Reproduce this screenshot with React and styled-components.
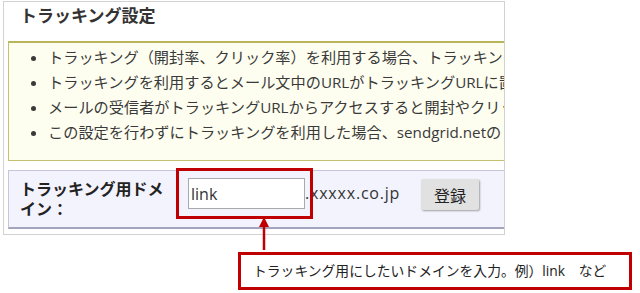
import React from "react";
import styled, { createGlobalStyle } from "styled-components";

const Global = createGlobalStyle`
  html, body { margin: 0; padding: 0; background: #ffffff; }
  body {
    font-family: "Open Sans", "Noto Sans CJK JP", sans-serif;
    color: #333;
    text-spacing-trim: space-all;
  }
`;

const Page = styled.div`
  position: relative;
  width: 640px;
  height: 293px;
  overflow: hidden;
  box-sizing: border-box;
  padding: 1px 0 0 3px;
  display: flex;
  flex-direction: column;
`;

const Panel = styled.section`
  width: 502px;
  height: 234px;
  box-sizing: border-box;
  border: 1px solid #d2d2d2;
  background: #fff;
  display: flex;
  flex-direction: column;
`;

const Title = styled.h2`
  margin: 0;
  height: 39px;
  box-sizing: border-box;
  padding-left: 16px;
  font-family: "Noto Sans CJK JP", sans-serif;
  font-size: 17px;
  font-weight: 700;
  line-height: 26px;
  color: #333;
`;

const Notice = styled.div`
  margin-left: 4px;
  height: 120px;
  box-sizing: border-box;
  background: #fefef0;
  border-top: 2px solid #b8b55c;
  border-left: 1px solid #c4c170;
  border-bottom: 1px solid #c4c170;
  overflow: hidden;
  padding: 2px 0 15px;
`;

const List = styled.ul`
  margin: 0;
  padding-left: 39px;
  list-style: disc;
`;

const Item = styled.li`
  font-size: 15.2px;
  line-height: 25px;
  white-space: nowrap;
  color: #3a3a3a;
`;

const Row = styled.div`
  margin: 9px 0 0 4px;
  height: 59px;
  box-sizing: border-box;
  background: #f3f3fd;
  border-top: 1px solid #c6c6d8;
  border-left: 1px solid #c6c6d8;
  border-bottom: 2px solid #a4a4bc;
  padding-top: 7px;
  display: flex;
  align-items: flex-start;
`;

const Label = styled.div`
  width: 167px;
  box-sizing: border-box;
  padding: 0 6px 0 11px;
  font-family: "Noto Sans CJK JP", sans-serif;
  font-size: 16px;
  font-weight: 700;
  line-height: 20px;
  color: #222;
`;

const InputWrap = styled.div`
  position: relative;
  margin-left: 12px;
  display: flex;
`;

const Input = styled.input`
  width: 117px;
  height: 31px;
  box-sizing: border-box;
  border: 1px solid #a9a9a9;
  background: #fff;
  padding: 0 2px;
  font-family: "Open Sans", "Noto Sans CJK JP", sans-serif;
  font-size: 16px;
  color: #333;
  outline: none;
`;

const Highlight = styled.div`
  position: absolute;
  left: -12px;
  top: -10px;
  width: 137px;
  height: 51px;
  box-sizing: border-box;
  border: 3px solid #c00000;
  pointer-events: none;
`;

const Arrow = styled.svg`
  position: absolute;
  left: 78px;
  top: calc(100% + 1px);
  overflow: visible;
`;

const Domain = styled.span`
  width: 116px;
  font-size: 16px;
  letter-spacing: 0.8px;
  line-height: 31px;
  color: #333;
`;

const Button = styled.button`
  width: 58px;
  height: 31px;
  margin-top: 1px;
  border: 0;
  border-radius: 2px;
  background: #e1e1e1;
  box-shadow: 1px 1px 2px rgba(0, 0, 0, 0.35);
  font-family: "Noto Sans CJK JP", sans-serif;
  font-size: 16px;
  color: #222;
  padding: 0;
`;

const Callout = styled.div`
  margin: 17px 0 0 235px;
  width: 394px;
  height: 38px;
  box-sizing: border-box;
  border: 3px solid #c00000;
  background: #fff;
  padding-left: 12px;
  font-family: "Open Sans", "Noto Sans CJK JP", sans-serif;
  font-size: 13.8px;
  line-height: 32px;
  color: #222;
  white-space: nowrap;
`;

const items = [
  "トラッキング（開封率、クリック率）を利用する場合、トラッキング用ドメインの設定が必要です。",
  "トラッキングを利用するとメール文中のURLがトラッキングURLに置き換えられます。",
  "メールの受信者がトラッキングURLからアクセスすると開封やクリックが計測されます。",
  "この設定を行わずにトラッキングを利用した場合、sendgrid.netのドメインが使用されます。",
];

export default function App() {
  return (
    <>
      <Global />
      <Page>
        <Panel>
          <Title>トラッキング設定</Title>
          <Notice>
            <List>
              {items.map((t) => (
                <Item key={t}>{t}</Item>
              ))}
            </List>
          </Notice>
          <Row>
            <Label>トラッキング用ドメイン：</Label>
            <InputWrap>
              <Input defaultValue="link" />
              <Highlight>
                <Arrow width="14" height="33" viewBox="0 0 14 33">
                  <polygon points="7,0 2,10 12,10" fill="#c00000" />
                  <line x1="7" y1="9" x2="7" y2="33" stroke="#c00000" strokeWidth="2.5" />
                </Arrow>
              </Highlight>
            </InputWrap>
            <Domain>.xxxxx.co.jp</Domain>
            <Button>登録</Button>
          </Row>
        </Panel>
        <Callout>トラッキング用にしたいドメインを入力。例）link　など</Callout>
      </Page>
    </>
  );
}
